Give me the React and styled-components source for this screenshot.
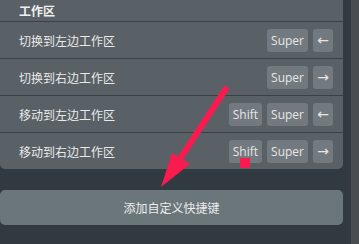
import React from "react";
import styled, { createGlobalStyle } from "styled-components";

const Global = createGlobalStyle`
  html, body { margin: 0; padding: 0; background: #303a40; overflow: hidden; }
  body { width: 359px; height: 244px; }
`;

const Page = styled.div`
  position: relative;
  width: 359px;
  height: 244px;
  display: flex;
  overflow: hidden;
  font-family: "Noto Sans CJK SC", "Noto Sans", sans-serif;
`;

const Content = styled.div`
  flex: 1;
  display: flex;
  flex-direction: column;
  padding-right: 8px;
`;

const Scrollbar = styled.div`
  width: 8px;
  background: #4a4d50;
`;

const Card = styled.div`
  margin-top: -8px;
  background: #596166;
  border-radius: 5px;
  display: flex;
  flex-direction: column;
`;

const Header = styled.div`
  height: 30px;
  padding: 8px 0 0 19px;
  box-sizing: border-box;
  display: flex;
  align-items: center;
  color: #f0f0f0;
  font-weight: 700;
  font-size: 12px;
  border-bottom: 1px solid #394147;
`;

const Row = styled.div`
  height: 36px;
  display: flex;
  align-items: center;
  justify-content: space-between;
  padding: 0 10px 0 19px;
  border-top: ${(p) => (p.$first ? "none" : "1px solid #394147")};
`;

const Label = styled.span`
  color: #eaeaea;
  font-size: 12px;
`;

const Keys = styled.div`
  display: flex;
  gap: 5px;
`;

const Key = styled.span`
  height: 23px;
  box-sizing: border-box;
  min-width: ${(p) => (p.$arrow ? "20px" : "0")};
  padding: 0 ${(p) => (p.$arrow ? "0" : "4px")};
  display: flex;
  align-items: center;
  justify-content: center;
  background: #737a7f;
  border-radius: 3px;
  color: #e6e6e6;
  font-family: ${(p) => (p.$arrow ? '"DejaVu Sans", sans-serif' : '"Open Sans", sans-serif')};
  font-size: ${(p) => (p.$arrow ? "14px" : "12px")};
`;

const AddButton = styled.div`
  margin-top: 21px;
  height: 35px;
  border-radius: 5px;
  background: #6b767b;
  color: #ececec;
  font-size: 12px;
  display: flex;
  align-items: center;
  justify-content: center;
`;

const Overlay = styled.svg`
  position: absolute;
  left: 0;
  top: 0;
  pointer-events: none;
`;

const rows = [
  { label: "切换到左边工作区", keys: ["Super", "←"] },
  { label: "切换到右边工作区", keys: ["Super", "→"] },
  { label: "移动到左边工作区", keys: ["Shift", "Super", "←"] },
  { label: "移动到右边工作区", keys: ["Shift", "Super", "→"] },
];

export default function App() {
  return (
    <Page>
      <Global />
      <Content>
        <Card>
          <Header>工作区</Header>
          {rows.map((r, i) => (
            <Row key={r.label} $first={i === 0}>
              <Label>{r.label}</Label>
              <Keys>
                {r.keys.map((k) => (
                  <Key key={k} $arrow={k === "←" || k === "→"}>
                    {k}
                  </Key>
                ))}
              </Keys>
            </Row>
          ))}
        </Card>
        <AddButton>添加自定义快捷键</AddButton>
      </Content>
      <Scrollbar />
      <Overlay width="359" height="244" viewBox="0 0 359 244">
        <line x1="227" y1="87" x2="178" y2="162" stroke="#f91b4f" strokeWidth="6" />
        <polygon points="161,187 172,153 190,164" fill="#f91b4f" />
        <rect x="240" y="158" width="10" height="10" fill="#f91b4f" />
      </Overlay>
    </Page>
  );
}
